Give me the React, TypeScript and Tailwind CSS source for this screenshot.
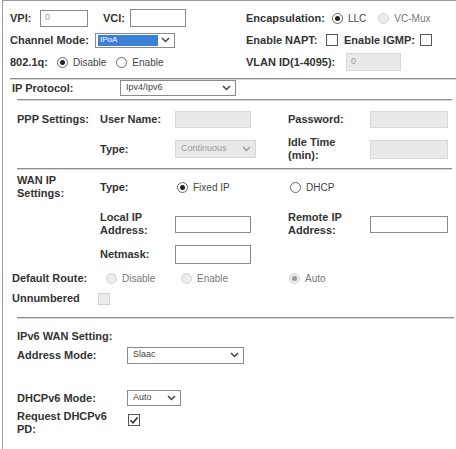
import React from 'react';

const font = { fontFamily: '"Liberation Sans", Arial, sans-serif' };

function Label({ children, className = '' }: { children: React.ReactNode; className?: string }) {
  return <div className={`text-[11px] font-bold leading-[13px] text-[#333] ${className}`}>{children}</div>;
}

function Radio({ checked = false, disabled = false, label }: { checked?: boolean; disabled?: boolean; label?: string }) {
  return (
    <div className="flex items-center gap-[5px]">
      <span
        className={`flex h-[11px] w-[11px] items-center justify-center rounded-full border ${
          disabled ? 'border-[#d4d4d4] bg-[#ececec]' : 'border-[#666] bg-white'
        }`}
      >
        {checked && <span className={`h-[5px] w-[5px] rounded-full ${disabled ? 'bg-[#9a9a9a]' : 'bg-[#222]'}`} />}
      </span>
      {label && <span className={`text-[10px] ${disabled ? 'text-[#777]' : 'text-[#444]'}`}>{label}</span>}
    </div>
  );
}

function Checkbox({ checked = false, disabled = false }: { checked?: boolean; disabled?: boolean }) {
  return (
    <span
      className={`flex h-[12px] w-[12px] items-center justify-center border ${
        disabled ? 'border-[#d0d0d0] bg-[#ececec]' : 'border-[#555] bg-white'
      }`}
    >
      {checked && (
        <svg width="10" height="10" viewBox="0 0 10 10">
          <path d="M1.5 5.2 L4 7.7 L8.7 2.2" fill="none" stroke="#333" strokeWidth="1.6" />
        </svg>
      )}
    </span>
  );
}

function TextBox({ w, h = 17, value = '', disabled = false }: { w: number; h?: number; value?: string; disabled?: boolean }) {
  return (
    <div
      style={{ width: w, height: h }}
      className={`flex items-center border px-[4px] text-[9px] text-[#999] ${
        disabled ? 'border-[#d8d8d8] bg-[#e9e9e9]' : 'border-[#8a8a8a] bg-white'
      }`}
    >
      {value}
    </div>
  );
}

function Chevron({ color = '#444' }: { color?: string }) {
  return (
    <svg width="9" height="6" viewBox="0 0 9 6" className="shrink-0">
      <path d="M1 1 L4.5 4.5 L8 1" fill="none" stroke={color} strokeWidth="1.5" />
    </svg>
  );
}

function Select({ w, h = 16, value, disabled = false, highlight = false }: { w: number; h?: number; value: string; disabled?: boolean; highlight?: boolean }) {
  return (
    <div
      style={{ width: w, height: h }}
      className={`flex items-center justify-between border pl-[2px] pr-[4px] text-[9px] ${
        disabled ? 'border-[#d8d8d8] bg-[#e9e9e9] text-[#999]' : 'border-[#8a8a8a] bg-white text-[#444]'
      }`}
    >
      {highlight ? (
        <span className="mr-[3px] flex h-[11px] flex-1 items-center bg-[#3b7fd9] pl-[2px] text-[8px] text-white">{value}</span>
      ) : (
        <span className="pl-[3px]">{value}</span>
      )}
      <Chevron color={disabled ? '#999' : '#444'} />
    </div>
  );
}

function Separator({ className = '' }: { className?: string }) {
  return <div className={`h-[2px] border-t border-[#8e8e8e] bg-[#d6d6d6] ${className}`} />;
}

export default function App() {
  return (
    <div style={font} className="h-[449px] w-[456px] overflow-hidden bg-white">
      <div className="ml-[2px] h-full border-l border-t border-[#9a9a9a] pt-[6px]">
        {/* top section */}
        <div className="flex pl-[7px]">
          <div className="w-[236px]">
            <div className="flex h-[22px] items-center">
              <Label className="w-[30px]">VPI:</Label>
              <TextBox w={48} value="0" />
              <Label className="ml-[15px] w-[27px]">VCI:</Label>
              <TextBox w={56} h={18} />
            </div>
            <div className="flex h-[22px] items-center">
              <Label className="w-[85px]">Channel Mode:</Label>
              <Select w={80} h={15} value="IPoA" highlight />
            </div>
            <div className="flex h-[22px] items-center">
              <Label className="w-[47px]">802.1q:</Label>
              <Radio checked label="Disable" />
              <div className="ml-[10px]">
                <Radio label="Enable" />
              </div>
            </div>
          </div>
          <div>
            <div className="flex h-[22px] items-center">
              <Label className="w-[86px]">Encapsulation:</Label>
              <Radio checked label="LLC" />
              <div className="ml-[12px]">
                <Radio disabled label="VC-Mux" />
              </div>
            </div>
            <div className="flex h-[22px] items-center">
              <Label className="w-[80px]">Enable NAPT:</Label>
              <Checkbox />
              <Label className="ml-[6px] w-[76px]">Enable IGMP:</Label>
              <Checkbox />
            </div>
            <div className="flex h-[22px] items-center">
              <Label className="w-[100px]">VLAN ID(1-4095):</Label>
              <TextBox w={55} h={18} value="0" disabled />
            </div>
          </div>
        </div>

        <Separator className="ml-[7px] mt-[5px]" />

        {/* IP protocol */}
        <div className="flex h-[16px] items-center pl-[9px]">
          <Label className="w-[108px]">IP Protocol:</Label>
          <Select w={116} value="Ipv4/Ipv6" />
        </div>

        <Separator className="ml-[14px] mr-[4px] mt-[3px]" />

        {/* PPP settings */}
        <div className="ml-[14px] mt-[9px] grid grid-cols-[83px_75px_113px_82px_80px]">
          <div className="flex h-[19px] items-center">
            <Label>PPP Settings:</Label>
          </div>
          <div className="flex items-center">
            <Label>User Name:</Label>
          </div>
          <div className="flex items-center">
            <TextBox w={76} disabled />
          </div>
          <div className="flex items-center">
            <Label>Password:</Label>
          </div>
          <div className="flex items-center">
            <TextBox w={78} disabled />
          </div>

          <div className="mt-[7px] h-[20px]" />
          <div className="mt-[7px] flex items-center">
            <Label>Type:</Label>
          </div>
          <div className="mt-[7px] flex items-center">
            <Select w={81} h={18} value="Continuous" disabled />
          </div>
          <div className="mt-[7px] flex items-center">
            <Label>
              Idle Time
              <br />
              (min):
            </Label>
          </div>
          <div className="mt-[7px] flex items-center">
            <TextBox w={78} h={19} disabled />
          </div>
        </div>

        <Separator className="ml-[14px] mr-[4px] mt-[6px]" />

        {/* WAN IP settings */}
        <div className="ml-[14px] mt-[7px] grid grid-cols-[83px_75px_113px_82px_80px]">
          <div className="flex h-[20px] items-center">
            <Label>
              WAN IP
              <br />
              Settings:
            </Label>
          </div>
          <div className="flex items-center">
            <Label>Type:</Label>
          </div>
          <div className="flex items-center pl-[2px]">
            <Radio checked label="Fixed IP" />
          </div>
          <div className="col-span-2 flex items-center pl-[2px]">
            <Radio label="DHCP" />
          </div>

          <div className="mt-[14px] h-[26px]" />
          <div className="mt-[14px] flex items-center">
            <Label>
              Local IP
              <br />
              Address:
            </Label>
          </div>
          <div className="mt-[14px] flex items-center">
            <TextBox w={76} />
          </div>
          <div className="mt-[14px] flex items-center">
            <Label>
              Remote IP
              <br />
              Address:
            </Label>
          </div>
          <div className="mt-[14px] flex items-center">
            <TextBox w={78} />
          </div>

          <div className="mt-[8px] h-[19px]" />
          <div className="mt-[8px] flex items-center">
            <Label>Netmask:</Label>
          </div>
          <div className="col-span-3 mt-[8px] flex items-center">
            <TextBox w={76} h={19} />
          </div>
        </div>

        <div className="ml-[9px] mt-[6px] flex h-[17px] items-center">
          <Label className="w-[94px]">Default Route:</Label>
          <div className="w-[75px]">
            <Radio disabled label="Disable" />
          </div>
          <div className="w-[108px]">
            <Radio disabled label="Enable" />
          </div>
          <Radio checked disabled label="Auto" />
        </div>

        <div className="ml-[9px] mt-[2px] flex h-[19px] items-center">
          <Label className="w-[86px]">Unnumbered</Label>
          <Checkbox disabled />
        </div>

        <Separator className="ml-[14px] mr-[2px] mt-[9px]" />

        {/* IPv6 */}
        <div className="ml-[14px] mt-[9px]">
          <div className="flex h-[16px] items-center">
            <Label>IPv6 WAN Setting:</Label>
          </div>
          <div className="mt-[2px] flex h-[18px] items-center">
            <Label className="w-[110px]">Address Mode:</Label>
            <Select w={117} h={17} value="Slaac" />
          </div>
          <div className="mt-[26px] flex h-[16px] items-center">
            <Label className="w-[110px]">DHCPv6 Mode:</Label>
            <Select w={54} value="Auto" />
          </div>
          <div className="mt-[4px] flex h-[26px] items-center">
            <Label className="w-[111px]">
              Request DHCPv6
              <br />
              PD:
            </Label>
            <div className="-mt-[6px]">
              <Checkbox checked />
            </div>
          </div>
        </div>
      </div>
    </div>
  );
}
